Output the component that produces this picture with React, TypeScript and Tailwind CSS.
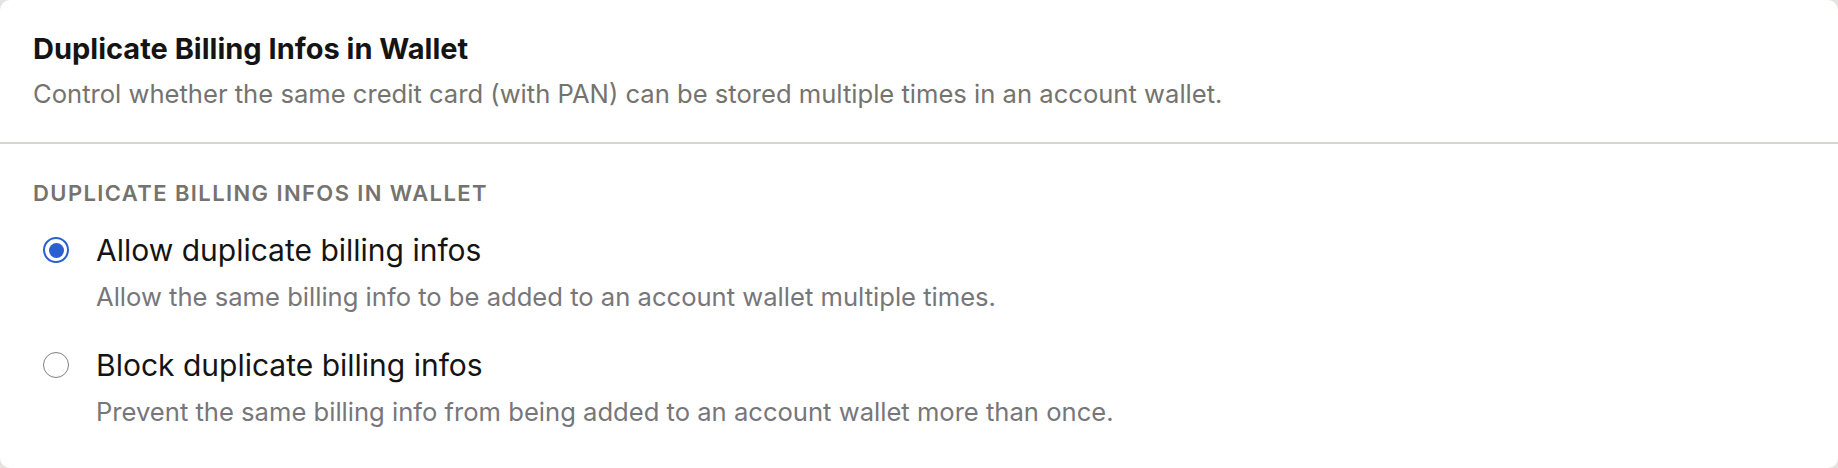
import { useState } from "react";

type Option = { id: string; label: string; description: string };

const options: Option[] = [
  {
    id: "allow",
    label: "Allow duplicate billing infos",
    description: "Allow the same billing info to be added to an account wallet multiple times.",
  },
  {
    id: "block",
    label: "Block duplicate billing infos",
    description: "Prevent the same billing info from being added to an account wallet more than once.",
  },
];

function Radio({ checked }: { checked: boolean }) {
  if (checked) {
    return (
      <span className="flex h-[26px] w-[26px] shrink-0 items-center justify-center rounded-full border-[2.5px] border-[#2b5fcf] bg-white">
        <span className="h-[15px] w-[15px] rounded-full bg-[#2b5fcf]" />
      </span>
    );
  }
  return <span className="block h-[26px] w-[26px] shrink-0 rounded-full border-[1.5px] border-[#808080] bg-white" />;
}

export default function App() {
  const [selected, setSelected] = useState("allow");

  return (
    <div className="h-[468px] w-[1838px] bg-[#e4e3df] font-['Inter',sans-serif]">
      <div className="h-full w-full overflow-hidden rounded-[10px] bg-white">
        {/* Header */}
        <div className="border-b-2 border-[#d6d5d0] px-[33px] pt-[32px] pb-[32px]">
          <h2 className="text-[29px] font-bold leading-[34px] text-[#141414]">
            Duplicate Billing Infos in Wallet
          </h2>
          <p className="mt-[12px] text-[25.6px] leading-[32px] text-[#75736e]">
            Control whether the same credit card (with PAN) can be stored multiple times in an account wallet.
          </p>
        </div>

        {/* Setting */}
        <div className="px-[33px] pt-[35px]">
          <div className="text-[22px] font-semibold uppercase leading-[28px] tracking-[1.4px] text-[#75736e]">
            Duplicate Billing Infos in Wallet
          </div>
          <div className="mt-[25px] flex flex-col gap-[34px]">
            {options.map((opt) => (
              <button
                key={opt.id}
                onClick={() => setSelected(opt.id)}
                className="flex items-start gap-[27px] pl-[10px] text-left"
              >
                <span className="flex h-[36px] items-center">
                  <Radio checked={selected === opt.id} />
                </span>
                <span className="flex flex-col">
                  <span className="text-[30px] leading-[36px] text-[#141414]">{opt.label}</span>
                  <span className="mt-[13px] text-[25.6px] leading-[32px] text-[#77767a]">{opt.description}</span>
                </span>
              </button>
            ))}
          </div>
        </div>
      </div>
    </div>
  );
}
